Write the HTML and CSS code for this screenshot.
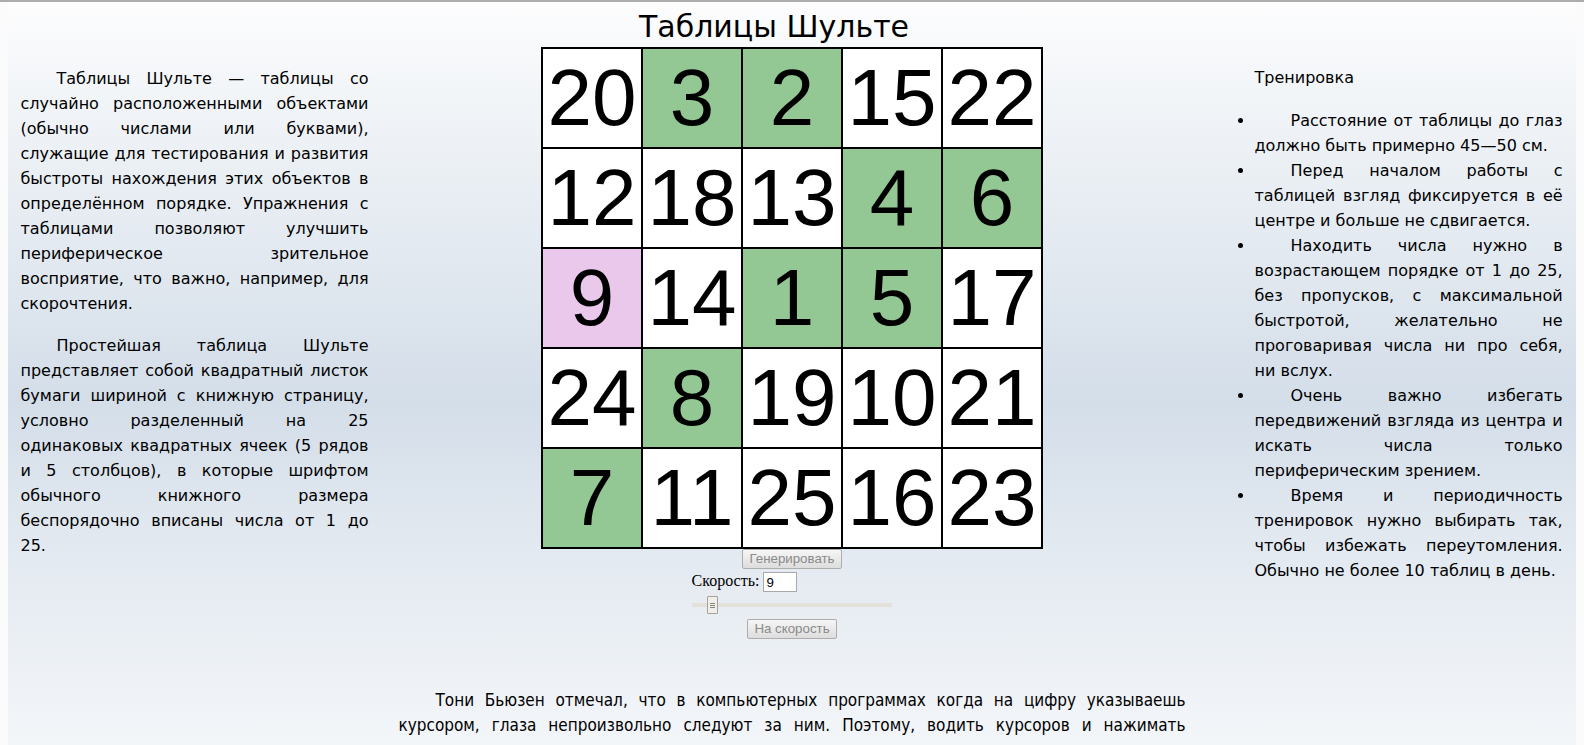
FILE: index.html
```html
<!DOCTYPE html>
<html lang="ru">
<head>
<meta charset="utf-8">
<title>Таблицы Шульте</title>
<link rel="stylesheet" href="styles.css">
</head>
<body>
<div class="topbar"></div>
<div class="page">
  <div class="main">
    <div class="col-left">
      <p>Таблицы Шульте — таблицы со случайно расположенными объектами (обычно числами или буквами), служащие для тестирования и развития быстроты нахождения этих объектов в определённом порядке. Упражнения с таблицами позволяют улучшить периферическое зрительное восприятие, что важно, например, для скорочтения.</p>
      <p class="p-last">Простейшая таблица Шульте представляет собой квадратный листок бумаги шириной с книжную страницу, условно разделенный на 25 одинаковых&nbsp;квадратных ячеек (5 рядов и&nbsp;5 столбцов), в которые шрифтом обычного книжного размера беспорядочно вписаны числа от 1 до<br>25.</p>
    </div>
    <div class="col-center">
      <h1 class="title">Таблицы Шульте</h1>
      <table class="schulte">
        <tr><td>20</td><td class="done">3</td><td class="done">2</td><td>15</td><td>22</td></tr>
        <tr><td>12</td><td>18</td><td>13</td><td class="done">4</td><td class="done">6</td></tr>
        <tr><td class="current">9</td><td>14</td><td class="done">1</td><td class="done">5</td><td>17</td></tr>
        <tr><td>24</td><td class="done">8</td><td>19</td><td>10</td><td>21</td></tr>
        <tr><td class="done">7</td><td>11</td><td>25</td><td>16</td><td>23</td></tr>
      </table>
      <div class="row"><button class="btn" disabled>Генерировать</button></div>
      <div class="speed"><label for="speed">Скорость:</label> <input id="speed" class="speed-input" type="text" value="9"></div>
      <div class="row"><input class="slider" type="range" min="1" max="100" value="9"></div>
      <div class="row"><button class="btn btn-go" disabled>На скорость</button></div>
    </div>
    <div class="col-right">
      <p class="r-title">Тренировка</p>
      <ul class="tips">
        <li>Расстояние от таблицы до глаз должно быть примерно 45—50 см.</li>
        <li>Перед началом работы с таблицей взгляд фиксируется в её центре и больше не сдвигается.</li>
        <li>Находить числа нужно в возрастающем порядке от 1 до 25, без пропусков, с максимальной быстротой, желательно не проговаривая числа ни про себя, ни&nbsp;вслух.</li>
        <li>Очень важно избегать передвижений взгляда из центра и искать числа только периферическим зрением.</li>
        <li>Время и периодичность тренировок нужно выбирать так, чтобы избежать переутомления. Обычно не более 10 таблиц в день.</li>
      </ul>
    </div>
  </div>
  <p class="bottom">Тони Бьюзен отмечал, что в компьютерных программах когда на цифру указываешь курсором, глаза непроизвольно следуют за ним. Поэтому, водить курсоров и нажимать</p>
</div>
</body>
</html>
```
FILE: styles.css
```css
html, body {
  margin: 0;
  padding: 0;
  background: #fbfbfb;
  overflow: hidden;
}
body {
  font-family: "DejaVu Sans", sans-serif;
  color: #000;
}
.topbar {
  height: 2px;
  background: #acacac;
}
.page {
  margin: 0 8px;
  min-height: 743px;
  background: linear-gradient(to bottom, #fdfdfe 0px, #f2f5f8 90px, #d4dee9 400px, #e4eaf1 560px, #f3f6f9 743px);
}
.main {
  display: grid;
  grid-template-columns: 1fr 847px 1fr;
  align-items: start;
}
.col-left {
  padding: 64px 0 0 12.5px;
  width: 348px;
  font-size: 16px;
  line-height: 25px;
  text-align: justify;
}
.col-left p {
  margin: 0 0 17px;
  text-indent: 36px;
}
.col-left .p-last {
  text-align-last: justify;
}
.col-center {
  padding-top: 5px;
  text-align: center;
}
.title {
  margin: 0;
  padding-right: 36px;
  font-size: 30px;
  font-weight: normal;
  line-height: 40px;
}
.schulte {
  margin: 0 auto;
  border-collapse: collapse;
  background: #fff;
}
.schulte td {
  width: 98px;
  height: 98px;
  padding: 0;
  border: 2px solid #000;
  font-family: "Liberation Sans", Arial, sans-serif;
  font-size: 80px;
  line-height: 98px;
  text-align: center;
  vertical-align: middle;
}
.schulte td.done {
  background: #93c793;
}
.schulte td.current {
  background: #eac8ec;
}
.row {
  line-height: 0;
}
.btn {
  height: 20px;
  padding: 0 6px;
  border: 1px solid #adadad;
  border-radius: 2px;
  background: linear-gradient(to bottom, #f6f6f6, #dddddd);
  color: #8a8a8a;
  font-family: "Liberation Sans", Arial, sans-serif;
  font-size: 13.3px;
  line-height: 18px;
}
.btn-go {
  margin-top: 5px;
}
.speed {
  padding-right: 95px;
  height: 21px;
  margin-top: 1px;
  font-family: "Liberation Serif", "Times New Roman", serif;
  font-size: 16px;
  line-height: 21px;
}
.speed-input {
  box-sizing: border-box;
  width: 34px;
  height: 20px;
  padding: 0 2px;
  border: 1px solid #a9a9a9;
  background: #fff;
  font-family: "Liberation Sans", Arial, sans-serif;
  font-size: 13.3px;
  vertical-align: middle;
}
.slider {
  -webkit-appearance: none;
  appearance: none;
  width: 200px;
  height: 18px;
  margin: 5px 0 0;
  padding: 0;
  background: transparent;
}
.slider::-webkit-slider-runnable-track {
  height: 4px;
  background: #e4e0da;
}
.slider::-webkit-slider-thumb {
  -webkit-appearance: none;
  width: 11px;
  height: 18px;
  margin-top: -7px;
  border: 1px solid #a8a298;
  border-radius: 1px;
  box-sizing: border-box;
  background:
    linear-gradient(#8a857c, #8a857c) 2px 6px / 5px 1px no-repeat,
    linear-gradient(#8a857c, #8a857c) 2px 8px / 5px 1px no-repeat,
    linear-gradient(#8a857c, #8a857c) 2px 10px / 5px 1px no-repeat,
    #f1efeb;
}
.col-right {
  padding: 63px 13.4px 0 39px;
  font-size: 16px;
  line-height: 25px;
  text-align: justify;
}
.r-title {
  margin: 0 0 18px;
}
.tips {
  margin: 0;
  padding: 0;
}
.tips li {
  text-indent: 36px;
}
.bottom {
  width: 787px;
  margin: 49px auto 0;
  font-family: "DejaVu Sans Condensed", "DejaVu Sans", sans-serif;
  font-stretch: condensed;
  font-size: 17px;
  line-height: 25px;
  text-align: justify;
  text-align-last: justify;
  text-indent: 37px;
}
```
